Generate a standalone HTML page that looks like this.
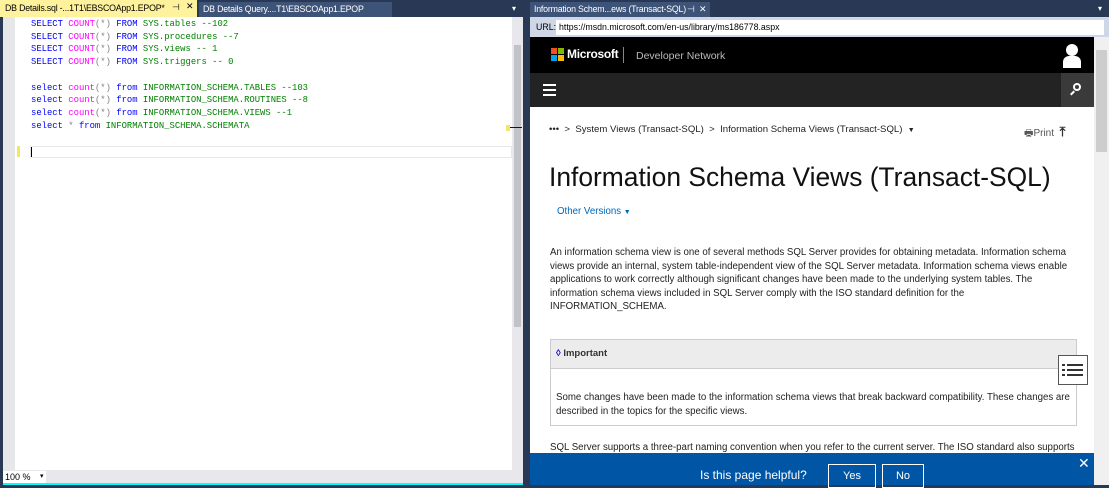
<!DOCTYPE html>
<html><head><meta charset="utf-8"><style>
*{margin:0;padding:0;box-sizing:border-box}
body{width:1109px;height:485px;background:#293955;position:relative;overflow:hidden;font-family:"Liberation Sans",sans-serif}
.a{position:absolute}
.code{font-family:"Liberation Mono",monospace;font-size:8.9px;white-space:pre;line-height:12.7px}
.k{color:#0000ff}.f{color:#ff00ff}.g{color:#808080}.t{color:#008000}
.p{font-size:9.7px;color:#222;white-space:nowrap;line-height:13.6px}
</style></head><body>
<!-- left tabs -->
<div class="a" style="left:0;top:0;width:197px;height:17px;background:#fff29d;font-size:8.8px;color:#000;padding:3px 0 0 5px;white-space:nowrap;letter-spacing:-0.2px">DB Details.sql -...1T1\EBSCOApp1.EPOP*<span style="position:absolute;left:172px;top:2px">⊣</span><span style="position:absolute;left:186px;top:1px">✕</span></div>
<div class="a" style="left:199px;top:2px;width:193px;height:15px;background:#3e5378;font-size:8.8px;color:#fff;padding:2px 0 0 4px;white-space:nowrap;letter-spacing:-0.2px">DB Details Query....T1\EBSCOApp1.EPOP</div>
<div class="a" style="left:512px;top:4px;color:#fff;font-size:8px">▾</div>
<!-- editor -->
<div class="a" style="left:3px;top:17px;width:520px;height:453px;background:#fff"></div>
<div class="a" style="left:3px;top:17px;width:12px;height:453px;background:#e6e7e8"></div>
<div class="a" style="left:512px;top:17px;width:11px;height:453px;background:#e8e8ec"></div>
<div class="a" style="left:514px;top:45px;width:7px;height:282px;background:#c2c3c9"></div>
<div class="a" style="left:506px;top:125px;width:4px;height:6px;background:#f5e663"></div>
<div class="a" style="left:510px;top:127px;width:12px;height:1px;background:#00c"></div>
<div class="a" style="left:17px;top:146px;width:3px;height:11px;background:#f5e663"></div>
<div class="a" style="left:30px;top:146px;width:482px;height:12px;border:1px solid #e8e8e8"></div>
<div class="a" style="left:31px;top:147px;width:1px;height:10px;background:#000"></div>
<div class="a code" style="left:31px;top:18px"><span class="k">SELECT</span> <span class="f">COUNT</span><span class="g">(*)</span> <span class="k">FROM</span> <span class="t">SYS.tables --102</span>
<span class="k">SELECT</span> <span class="f">COUNT</span><span class="g">(*)</span> <span class="k">FROM</span> <span class="t">SYS.procedures --7</span>
<span class="k">SELECT</span> <span class="f">COUNT</span><span class="g">(*)</span> <span class="k">FROM</span> <span class="t">SYS.views -- 1</span>
<span class="k">SELECT</span> <span class="f">COUNT</span><span class="g">(*)</span> <span class="k">FROM</span> <span class="t">SYS.triggers -- 0</span>

<span class="k">select</span> <span class="f">count</span><span class="g">(*)</span> <span class="k">from</span> <span class="t">INFORMATION_SCHEMA.TABLES --103</span>
<span class="k">select</span> <span class="f">count</span><span class="g">(*)</span> <span class="k">from</span> <span class="t">INFORMATION_SCHEMA.ROUTINES --8</span>
<span class="k">select</span> <span class="f">count</span><span class="g">(*)</span> <span class="k">from</span> <span class="t">INFORMATION_SCHEMA.VIEWS --1</span>
<span class="k">select</span> <span class="g">*</span> <span class="k">from</span> <span class="t">INFORMATION_SCHEMA.SCHEMATA</span></div>
<div class="a" style="left:3px;top:470px;width:520px;height:13px;background:#e8e8ec"></div>
<div class="a" style="left:3px;top:471px;width:43px;height:12px;background:#fff;font-size:9px;padding-left:2px;line-height:12px">100 %<span style="position:absolute;left:37px;font-size:7px">▾</span></div>
<div class="a" style="left:3px;top:483px;width:520px;height:2px;background:#00ffff"></div>
<!-- right tab -->
<div class="a" style="left:530px;top:2px;width:180px;height:15px;background:#3e5378;font-size:8.8px;color:#fff;padding:2px 0 0 4px;white-space:nowrap;letter-spacing:-0.2px">Information Schem...ews (Transact-SQL)<span style="position:absolute;left:157px">⊣</span><span style="position:absolute;left:169px">✕</span></div>
<div class="a" style="left:1098px;top:4px;color:#fff;font-size:8px">▾</div>
<div class="a" style="left:530px;top:17px;width:579px;height:20px;background:#cfd6e5"></div>
<div class="a" style="left:536px;top:22px;font-size:8.8px">URL:</div>
<div class="a" style="left:556px;top:20px;width:548px;height:15px;background:#fff;font-size:8.8px;padding:2px 0 0 3px">https://msdn.microsoft.com/en-us/library/ms186778.aspx</div>
<!-- browser -->
<div class="a" style="left:530px;top:37px;width:564px;height:448px;background:#fff"></div>
<div class="a" style="left:1094px;top:37px;width:15px;height:448px;background:#f0f0f0"></div>
<div class="a" style="left:1096px;top:50px;width:11px;height:102px;background:#cdcdcd"></div>
<div class="a" style="left:530px;top:37px;width:564px;height:36px;background:#000"></div>
<div class="a" style="left:551px;top:48px;width:6px;height:6px;background:#f25022"></div>
<div class="a" style="left:558px;top:48px;width:6px;height:6px;background:#7fba00"></div>
<div class="a" style="left:551px;top:55px;width:6px;height:6px;background:#00a4ef"></div>
<div class="a" style="left:558px;top:55px;width:6px;height:6px;background:#ffb900"></div>
<div class="a" style="left:567px;top:47px;color:#fff;font-size:12px;font-weight:bold;letter-spacing:-0.3px">Microsoft</div>
<div class="a" style="left:623px;top:47px;width:1px;height:16px;background:#888"></div>
<div class="a" style="left:636px;top:50px;color:#bbb;font-size:10.5px">Developer Network</div>
<div class="a" style="left:1066px;top:44px;width:12px;height:12px;border-radius:50%;background:#fff"></div>
<div class="a" style="left:1063px;top:56px;width:18px;height:12px;border-radius:6px 6px 0 0;background:#fff"></div>
<div class="a" style="left:530px;top:73px;width:564px;height:34px;background:#232323"></div>
<div class="a" style="left:1061px;top:73px;width:33px;height:34px;background:#3a3a3a"></div>
<div class="a" style="left:543px;top:84px;width:13px;height:2px;background:#fff;box-shadow:0 5px 0 #fff,0 10px 0 #fff"></div>
<div class="a" style="left:1073px;top:83px;width:8px;height:8px;border:2px solid #fff;border-radius:50%"></div>
<div class="a" style="left:1070px;top:92px;width:5px;height:2px;background:#fff;transform:rotate(-45deg)"></div>
<div class="a" style="left:549px;top:124px;font-size:9.6px;color:#222;white-space:nowrap">•••&nbsp; &gt;&nbsp; System Views (Transact-SQL)&nbsp; &gt;&nbsp; Information Schema Views (Transact-SQL)&nbsp; <span style="font-size:7px">▼</span></div>
<div class="a" style="left:1024px;top:124px;font-size:10px;color:#555">🖶Print&nbsp; <b style="color:#333;font-size:13px">⤒</b></div>
<div class="a" style="left:549px;top:162px;font-size:26.4px;color:#111;white-space:nowrap">Information Schema Views (Transact-SQL)</div>
<div class="a" style="left:557px;top:206px;font-size:9.7px;color:#0067b8">Other Versions <span style="font-size:7px">▼</span></div>
<div class="a p" style="left:550px;top:246px">An information schema view is one of several methods SQL Server provides for obtaining metadata. Information schema<br>views provide an internal, system table-independent view of the SQL Server metadata. Information schema views enable<br>applications to work correctly although significant changes have been made to the underlying system tables. The<br>information schema views included in SQL Server comply with the ISO standard definition for the<br>INFORMATION_SCHEMA.</div>
<div class="a" style="left:550px;top:339px;width:527px;height:87px;border:1px solid #ccc"></div>
<div class="a" style="left:551px;top:340px;width:525px;height:29px;background:#ececec;border-bottom:1px solid #ccc"></div>
<div class="a" style="left:556px;top:348px;font-size:9.5px;font-weight:bold;color:#333"><span style="color:#00c">◊</span> Important</div>
<div class="a p" style="left:556px;top:391px">Some changes have been made to the information schema views that break backward compatibility. These changes are<br>described in the topics for the specific views.</div>
<div class="a" style="left:1058px;top:355px;width:30px;height:30px;border:1px solid #555;background:#fff"></div>
<div class="a" style="left:1062px;top:364px;width:3px;height:2px;background:#333;box-shadow:0 5px 0 #333,0 10px 0 #333"></div>
<div class="a" style="left:1067px;top:364px;width:16px;height:2px;background:#333;box-shadow:0 5px 0 #333,0 10px 0 #333"></div>
<div class="a p" style="left:550px;top:441px">SQL Server supports a three-part naming convention when you refer to the current server. The ISO standard also supports</div>
<div class="a" style="left:530px;top:453px;width:564px;height:32px;background:#0055a5"></div>
<div class="a" style="left:700px;top:468px;color:#fff;font-size:12px">Is this page helpful?</div>
<div class="a" style="left:828px;top:464px;width:48px;height:24px;border:1px solid #fff;color:#fff;font-size:11px;text-align:center;padding-top:5px">Yes</div>
<div class="a" style="left:882px;top:464px;width:42px;height:24px;border:1px solid #fff;color:#fff;font-size:11px;text-align:center;padding-top:5px">No</div>
<div class="a" style="left:1078px;top:455px;color:#fff;font-size:14px">✕</div>
</body></html>
